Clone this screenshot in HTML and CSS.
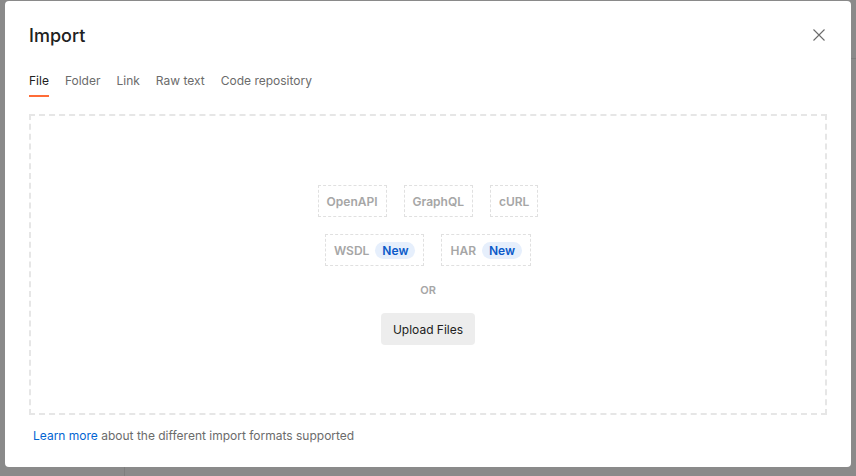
FILE: index.html
```html
<!DOCTYPE html>
<html>
<head>
<meta charset="utf-8">
<link rel="stylesheet" href="styles.css">
</head>
<body>
<div class="backdrop">
  <div class="bg-line bg-v"></div>
  <div class="bg-line bg-h"></div>
  <div class="modal">
    <div class="header">
      <h1 class="title">Import</h1>
      <button class="close" aria-label="Close">
        <svg width="12" height="12" viewBox="0 0 12 12"><path d="M0.5 0.5 L11.5 11.5 M11.5 0.5 L0.5 11.5" stroke="#6b6b6b" stroke-width="1.1" fill="none"/></svg>
      </button>
    </div>
    <nav class="tabs">
      <span class="tab active">File</span>
      <span class="tab">Folder</span>
      <span class="tab">Link</span>
      <span class="tab">Raw text</span>
      <span class="tab">Code repository</span>
    </nav>
    <div class="dropzone">
      <div class="chip-row">
        <span class="chip">OpenAPI</span>
        <span class="chip">GraphQL</span>
        <span class="chip">cURL</span>
      </div>
      <div class="chip-row">
        <span class="chip">WSDL <span class="badge">New</span></span>
        <span class="chip">HAR <span class="badge">New</span></span>
      </div>
      <div class="or">OR</div>
      <button class="upload">Upload Files</button>
    </div>
    <p class="footer"><a class="link">Learn more</a> about the different import formats supported</p>
  </div>
</div>
</body>
</html>
```
FILE: styles.css
```css
* { box-sizing: border-box; }
html, body { margin: 0; padding: 0; }
body {
  width: 856px;
  height: 476px;
  overflow: hidden;
  background: #8a8a8a;
  font-family: Inter, "Noto Sans", sans-serif;
}
.backdrop {
  position: relative;
  width: 856px;
  height: 476px;
  padding: 1px 5px 0 5px;
}
.bg-line { position: absolute; background: #7e7e7e; }
.bg-v { left: 124px; top: 467px; width: 1px; height: 9px; }
.bg-h { left: 851px; top: 58px; width: 5px; height: 1px; }
.modal {
  position: relative;
  width: 846px;
  height: 466px;
  background: #fff;
  border-radius: 4px;
  padding: 0 24px;
  display: flex;
  flex-direction: column;
}
.header {
  display: flex;
  align-items: center;
  justify-content: space-between;
  height: 70px;
  padding-bottom: 2px;
}
.title {
  margin: 0;
  font-size: 18px;
  font-weight: 500;
  color: #212121;
}
.close {
  border: 0;
  background: none;
  padding: 0;
  margin-right: 1px;
  width: 14px;
  height: 14px;
  display: flex;
  align-items: center;
  justify-content: center;
}
.tabs {
  display: flex;
  gap: 16px;
  height: 27px;
  align-items: flex-start;
}
.tab {
  font-size: 12px;
  color: #6b6b6b;
  line-height: 19px;
  height: 26px;
  border-bottom: 2px solid transparent;
}
.tab.active {
  color: #212121;
  border-bottom-color: #ff6c37;
}
.dropzone {
  margin-top: 16px;
  height: 301px;
  border: 2px dashed #e6e6e6;
  display: flex;
  flex-direction: column;
  align-items: center;
  padding-top: 69px;
}
.chip-row {
  display: flex;
  gap: 17px;
  margin-bottom: 17px;
}
.chip {
  height: 32px;
  display: inline-flex;
  align-items: center;
  gap: 6px;
  padding: 0 8px;
  border: 1px dashed #e0e0e0;
  font-size: 12px;
  font-weight: 600;
  color: #a6a6a6;
}
.badge {
  background: #e6effc;
  color: #0b5ac9;
  border-radius: 9px;
  padding: 0 7px;
  line-height: 17px;
  font-size: 12px;
  font-weight: 600;
}
.or {
  font-size: 11px;
  font-weight: 600;
  color: #a6a6a6;
  line-height: 14px;
}
.upload {
  margin-top: 16px;
  height: 32px;
  padding: 0 12px;
  border: 0;
  border-radius: 4px;
  background: #ededed;
  color: #212121;
  font-family: Inter, "Noto Sans", sans-serif;
  font-size: 12px;
}
.footer {
  margin: 13px 0 0 4px;
  font-size: 12px;
  color: #6b6b6b;
  line-height: 16px;
}
.link { color: #0265d2; }
```
